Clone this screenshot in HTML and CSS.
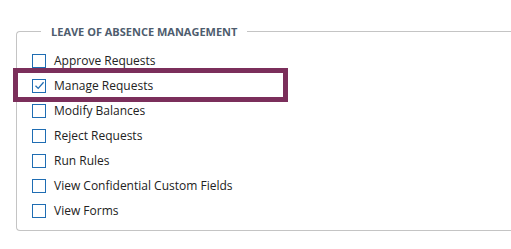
FILE: index.html
```html
<!DOCTYPE html>
<html lang="en">
<head>
  <meta charset="UTF-8" />
  <title>Leave of Absence Management</title>
  <link rel="stylesheet" href="styles.css">
</head>
<body>
  <fieldset class="perm-group">
    <legend>Leave of Absence Management</legend>

    <label class="perm"><span class="box"></span>Approve Requests</label>
    <label class="perm is-flagged">
      <span class="box">
        <svg width="11" height="11" viewBox="0 0 11 11"><path d="M1.5 5.8 L4.2 8.4 L9.6 2.2" fill="none" stroke="#1f6db3" stroke-width="1.3"/></svg>
      </span>Manage Requests</label>
    <label class="perm"><span class="box"></span>Modify Balances</label>
    <label class="perm"><span class="box"></span>Reject Requests</label>
    <label class="perm"><span class="box"></span>Run Rules</label>
    <label class="perm"><span class="box"></span>View Confidential Custom Fields</label>
    <label class="perm"><span class="box"></span>View Forms</label>
  </fieldset>
</body>
</html>
```

FILE: styles.css
```css
* {
  box-sizing: border-box;
}

body {
  margin: 0;
  font-family: 'Open Sans', sans-serif;
  color: #222;
  background: #fff;
  overflow: hidden;
}

.perm-group {
  width: 495px;
  height: 207px;
  margin: 24px 0 0 16px;
  padding: 9px 0 0 15px;
  border: 1px solid #c4c4c4;
  border-right: 0;
  border-radius: 4px 0 0 4px;
}

legend {
  margin-left: 9px;
  padding: 0 10px;
  font-size: 11px;
  font-weight: 700;
  text-transform: uppercase;
  color: #4e5d6e;
}

.perm {
  position: relative;
  display: flex;
  align-items: center;
  height: 25px;
  font-size: 12px;
}

.box {
  display: flex;
  align-items: center;
  justify-content: center;
  width: 14px;
  height: 14px;
  margin-right: 8px;
  border: 1.5px solid #1f6db3;
  background: #fff;
}

/* review annotation around one row */
.is-flagged::before {
  content: "";
  box-sizing: border-box;
  position: absolute;
  left: -19px;
  top: -5px;
  width: 275px;
  height: 34px;
  border: 5px solid #7b2f5b;
}
```
